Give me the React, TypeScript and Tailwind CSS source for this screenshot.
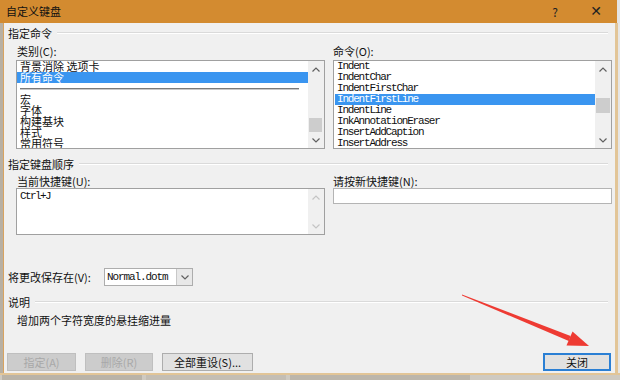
import React from "react";

const categories: Array<{ text: string; selected?: boolean; separator?: boolean }> = [
  { text: "背景消除 选项卡" },
  { text: "所有命令", selected: true },
  { text: "", separator: true },
  { text: "宏" },
  { text: "字体" },
  { text: "构建基块" },
  { text: "样式" },
  { text: "常用符号" },
];

const commands = [
  "Indent",
  "IndentChar",
  "IndentFirstChar",
  "IndentFirstLine",
  "IndentLine",
  "InkAnnotationEraser",
  "InsertAddCaption",
  "InsertAddress",
];

function Chevron({ down, color }: { down?: boolean; color: string }) {
  return (
    <svg width="8" height="5" viewBox="0 0 8 5">
      <polyline
        points={down ? "0.5,0.5 4,4 7.5,0.5" : "0.5,4.5 4,1 7.5,4.5"}
        fill="none"
        stroke={color}
        strokeWidth="1.2"
      />
    </svg>
  );
}

function VScroll({ thumb, disabled }: { thumb?: string; disabled?: boolean }) {
  const color = disabled ? "#c4c4c4" : "#606060";
  return (
    <div className="w-[16px] flex flex-col bg-[#f0f0f0]">
      <div className="h-[16px] flex items-center justify-center">
        <Chevron color={color} />
      </div>
      <div className="flex-1 relative">
        {thumb && <div className={thumb} />}
      </div>
      <div className="h-[16px] flex items-center justify-center">
        <Chevron down color={color} />
      </div>
    </div>
  );
}

function Section({ title }: { title: string }) {
  return (
    <div className="h-[14px] flex items-center gap-[5px] pl-[4px] pr-[7px] leading-[14px]">
      <span>{title}</span>
      <div className="flex-1 border-t border-[#dadada] border-b border-b-white" />
    </div>
  );
}

function Btn({ children, disabled, primary, w }: { children: React.ReactNode; disabled?: boolean; primary?: boolean; w: string }) {
  return (
    <div
      className={
        w +
        " h-[18px] flex items-center justify-center leading-none " +
        (disabled
          ? "bg-[#cccccc] border border-[#bfbfbf] text-[#a8a8a8]"
          : primary
          ? "bg-[#e1e1e1] border-2 border-[#2a7fd4]"
          : "bg-[#e1e1e1] border border-[#adadad]")
      }
    >
      {children}
    </div>
  );
}

export default function App() {
  return (
    <div className="w-[620px] h-[380px] overflow-hidden relative flex flex-col bg-[#d9d4ca] text-[11px] text-[#111] font-['Noto_Sans_CJK_SC','Noto_Sans',sans-serif]">
      {/* title bar */}
      <div className="h-[23px] flex">
        <div className="w-[617px] bg-[#d38b30] flex items-center pl-[6px] text-[11px]">
          <span className="flex-1">自定义键盘</span>
          <span className="w-[40px] text-center text-[12px] text-[#222]">?</span>
          <span className="w-[42px] text-center text-[14px] text-[#222] font-['DejaVu_Sans',sans-serif]">✕</span>
        </div>
        <div className="flex-1 bg-[#e4e4e4]" />
      </div>

      <div className="flex h-[350px]">
        <div className="w-[4px] bg-[#b8b0a3] border-r border-[#d8a360]" />
        <div className="w-[611px] bg-[#f0f0f0] flex flex-col pt-[3px] pb-[2px]">
          <Section title="指定命令" />

          {/* commands */}
          <div className="flex gap-[8px] pl-[12px] pr-[3px] mt-[4px]">
            <div className="w-[309px] flex flex-col">
              <div className="h-[14px] leading-[14px] pl-[1px]">类别(C):</div>
              <div className="mt-[2px] h-[89px] border border-[#a0a0a0] bg-white flex overflow-hidden">
                <div className="flex-1 flex flex-col overflow-hidden">
                  {categories.map((c, i) =>
                    c.separator ? (
                      <div key={i} className="h-[11px] flex items-center px-[3px] pr-[9px] shrink-0">
                        <div className="w-full h-[2px] bg-[#7a7a7a] border-b border-[#c8c8c8]" />
                      </div>
                    ) : (
                      <div
                        key={i}
                        className={
                          "h-[11px] leading-[11px] pl-[3px] shrink-0 whitespace-pre " +
                          (c.selected ? "bg-[#3a95f0] text-white" : "")
                        }
                      >
                        {c.text}
                      </div>
                    )
                  )}
                </div>
                <VScroll thumb="absolute left-[1px] right-[2px] bottom-0 h-[14px] bg-[#cdcdcd]" />
              </div>
            </div>
            <div className="w-[279px] flex flex-col">
              <div className="h-[14px] leading-[14px]">命令(O):</div>
              <div className="mt-[2px] h-[89px] border border-[#a0a0a0] bg-white flex overflow-hidden">
                <div className="flex-1 flex flex-col pl-[1px] font-['Liberation_Mono',monospace] text-[11px] tracking-[-1.2px]">
                  {commands.map((c) => (
                    <div
                      key={c}
                      className={
                        "h-[11px] leading-[11px] pl-[2px] shrink-0 " +
                        (c === "IndentFirstLine" ? "bg-[#3a95f0] text-white" : "")
                      }
                    >
                      {c}
                    </div>
                  ))}
                </div>
                <VScroll thumb="absolute left-[1px] right-[1px] top-[21px] h-[15px] bg-[#cdcdcd]" />
              </div>
            </div>
          </div>

          <div className="mt-[8px]">
            <Section title="指定键盘顺序" />
          </div>

          {/* keys */}
          <div className="flex gap-[8px] pl-[12px] pr-[3px] mt-[3px]">
            <div className="w-[309px] flex flex-col">
              <div className="h-[14px] leading-[14px] pl-[1px]">当前快捷键(U):</div>
              <div className="h-[47px] border border-[#a0a0a0] bg-white flex">
                <div className="flex-1 pl-[3px] pt-[2px] font-['Liberation_Mono',monospace] text-[11px] tracking-[-1.6px] leading-[11px]">
                  Ctrl+J
                </div>
                <VScroll disabled />
              </div>
            </div>
            <div className="w-[279px] flex flex-col">
              <div className="h-[14px] leading-[14px]">请按新快捷键(N):</div>
              <div className="h-[16px] border border-[#b4b4b4] bg-white" />
            </div>
          </div>

          {/* save in */}
          <div className="flex items-center pl-[4px] mt-[33px] h-[18px]">
            <span className="w-[96px]">将更改保存在(V):</span>
            <div className="w-[89px] h-[18px] border border-[#adadad] bg-white flex">
              <div className="flex-1 pl-[2px] font-['Liberation_Mono',monospace] text-[11px] tracking-[-1.1px] leading-[16px]">
                Normal.dotm
              </div>
              <div className="w-[16px] bg-[#e8e8e8] border-l border-[#c8c8c8] flex items-center justify-center">
                <Chevron down color="#606060" />
              </div>
            </div>
          </div>

          <div className="mt-[9px]">
            <Section title="说明" />
          </div>
          <div className="mt-[4px] pl-[13px] h-[14px] leading-[14px]">增加两个字符宽度的悬挂缩进量</div>

          {/* buttons */}
          <div className="mt-[26px] flex items-center pl-[3px] pr-[4px] gap-[9px]">
            <Btn disabled w="w-[69px]">指定(A)</Btn>
            <Btn disabled w="w-[68px]">删除(R)</Btn>
            <Btn w="w-[91px]">全部重设(S)...</Btn>
            <div className="flex-1" />
            <Btn primary w="w-[68px]">关闭</Btn>
          </div>
        </div>
        <div className="w-[3px] bg-[#e2c597]" />
        <div className="flex-1 bg-[#e6e6e6]" />
      </div>

      <div className="h-[2px] bg-[#e2c597]" />
      <div className="flex-1 flex gap-[4px] bg-[#cfcac1] px-[2px]">
        <div className="w-[140px] bg-[#b9b3a8]" />
        <div className="w-[140px] bg-[#c4beb4]" />
        <div className="w-[180px] bg-[#bcb6ab]" />
      </div>

      {/* red annotation arrow */}
      <svg className="absolute left-0 top-0 pointer-events-none" width="620" height="380">
        <polygon points="462,294.5 570.6,336 568.8,341 462,295.5" fill="#ee3b33" />
        <polygon points="589,346 566.5,345.5 572.5,331.5" fill="#ee3b33" />
      </svg>
    </div>
  );
}
